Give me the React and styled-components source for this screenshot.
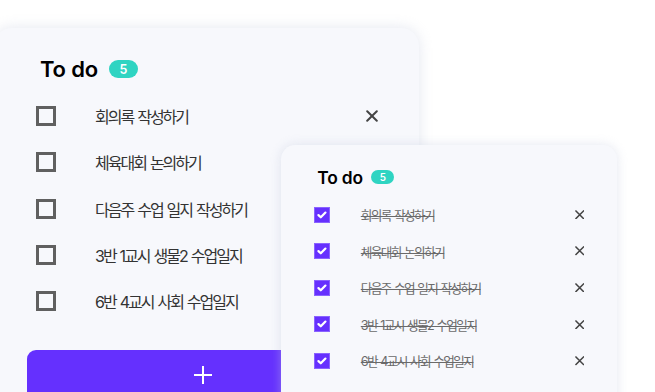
import React from "react"
import styled, { createGlobalStyle } from "styled-components"

const TODOS = [
  "회의록 작성하기",
  "체육대회 논의하기",
  "다음주 수업 일지 작성하기",
  "3반 1교시 생물2 수업일지",
  "6반 4교시 사회 수업일지",
]

// every size of a card is given at full scale and multiplied by $s
const u = (n) => ({ $s }) => `${n * $s}px`

const GlobalStyle = createGlobalStyle`
  html, body {
    margin: 0;
    background: #ffffff;
  }
  body {
    font-family: Inter, "Noto Sans CJK KR", sans-serif;
    -webkit-font-smoothing: antialiased;
  }
`

const CheckIcon = () => (
  <svg viewBox='0 0 16 16' width='100%' height='100%'>
    <path
      d='M4 8.2l2.7 2.6 5.4-5.5'
      fill='none'
      stroke='#fff'
      strokeWidth='2.6'
      strokeLinecap='round'
      strokeLinejoin='round'
    />
  </svg>
)

const CloseIcon = () => (
  <svg viewBox='0 0 12 12' width='100%' height='100%'>
    <path
      d='M1.2 1.2l9.6 9.6M10.8 1.2l-9.6 9.6'
      fill='none'
      stroke='#444'
      strokeWidth='2'
      strokeLinecap='round'
    />
  </svg>
)

const PlusIcon = () => (
  <svg viewBox='0 0 18 18' width='100%' height='100%'>
    <path d='M9 0v18M0 9h18' fill='none' stroke='#fff' strokeWidth='2' />
  </svg>
)

const TodoCard = ({ scale = 1, done = false, className }) => (
  <Card $s={scale} className={className}>
    <Header $s={scale}>
      <Title $s={scale}>To do</Title>
      <Badge $s={scale}>{TODOS.length}</Badge>
    </Header>
    <List>
      {TODOS.map((text) => (
        <Row key={text} $s={scale}>
          <Box $s={scale} $checked={done}>
            {done && <CheckIcon />}
          </Box>
          <Label $s={scale} $done={done}>
            {text}
          </Label>
          <Remove $s={scale}>
            <CloseIcon />
          </Remove>
        </Row>
      ))}
    </List>
    <AddButton $s={scale}>
      <PlusWrap $s={scale}>
        <PlusIcon />
      </PlusWrap>
    </AddButton>
  </Card>
)

export default function App() {
  return (
    <>
      <GlobalStyle />
      <Stage>
        <MainCard />
        <DoneCard scale={0.79} done />
      </Stage>
    </>
  )
}

const Stage = styled.div`
  position: relative;
  width: 655px;
  height: 392px;
  overflow: hidden;
  padding-top: 28px;
  box-sizing: border-box;
`

const Card = styled.div`
  width: ${u(425)};
  box-sizing: border-box;
  background: #f7f8fc;
  border-radius: ${u(18)};
  box-shadow: 0 0 ${u(14)} rgba(196, 202, 222, 0.45);
  padding-top: ${u(28)};
  padding-bottom: ${u(40)};
`

const MainCard = styled(TodoCard)`
  margin-left: -6px;
`

// the finished list floats over the lower right of the main card
const DoneCard = styled(TodoCard)`
  position: absolute;
  left: 281px;
  top: 145px;
`

const Header = styled.div`
  display: flex;
  align-items: center;
  gap: ${u(11)};
  height: ${u(26)};
  padding-left: ${u(46)};
  margin-bottom: ${u(11)};
`

const Title = styled.h2`
  margin: 0;
  font-size: ${u(22)};
  line-height: 1;
  font-weight: 600;
  color: #000;
  letter-spacing: -0.2px;
`

const Badge = styled.span`
  display: flex;
  align-items: center;
  justify-content: center;
  width: ${u(29)};
  height: ${u(18)};
  border-radius: ${u(9)};
  background: #2fd4c2;
  color: #fff;
  font-size: ${u(12.5)};
  font-weight: 600;
`

const List = styled.div`
  display: flex;
  flex-direction: column;
`

const Row = styled.div`
  display: flex;
  align-items: center;
  height: ${u(46.3)};
  padding-left: ${u(42)};
  padding-right: ${u(41)};
`

const Box = styled.span`
  flex: none;
  width: ${u(20)};
  height: ${u(20)};
  box-sizing: border-box;
  border: ${({ $checked, $s }) =>
    $checked ? `1px solid #8a63ff` : `${3 * $s}px solid #606060`};
  background: ${({ $checked }) => ($checked ? "#6630fe" : "transparent")};
  display: flex;
`

const Label = styled.span`
  flex: 1;
  margin-left: ${u(39)};
  font-size: ${u(16)};
  letter-spacing: ${u(-2)};
  word-spacing: ${u(1.5)};
  color: ${({ $done }) => ($done ? "#6a6a6a" : "#333")};
  text-decoration: ${({ $done }) => ($done ? "line-through" : "none")};
  text-decoration-thickness: 1px;
  white-space: nowrap;
`

const Remove = styled.span`
  flex: none;
  width: ${u(12)};
  height: ${u(12)};
  display: flex;
`

const AddButton = styled.div`
  margin-top: ${u(25.5)};
  margin-left: ${u(33)};
  width: ${u(352)};
  height: ${u(50)};
  border-radius: ${u(9)};
  background: #6530fe;
  display: flex;
  align-items: center;
  justify-content: center;
`

const PlusWrap = styled.span`
  width: ${u(18)};
  height: ${u(18)};
  display: flex;
`
